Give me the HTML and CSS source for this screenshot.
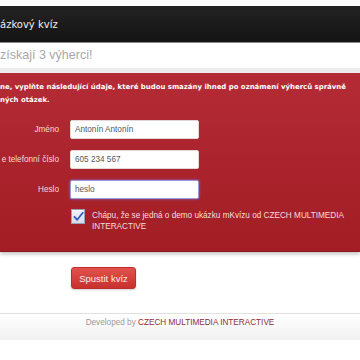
FILE: index.html
```html
<!DOCTYPE html>
<html lang="cs">
<head>
  <meta charset="UTF-8" />
  <meta name="viewport" content="width=device-width, initial-scale=1.0" />
  <title>Ukázkový kvíz</title>
  <link rel="stylesheet" href="styles.css">
</head>
<body>
  <div class="page">
    <!-- Header -->
    <div class="topbar">
      <div class="title">ázkový kvíz</div>
    </div>
    <div class="subtitle">získají 3 výherci!</div>

    <!-- Registration form -->
    <div class="panel">
      <p class="intro">ne, vyplňte následující údaje, které budou smazány ihned po oznámení výherců správně<br>ných otázek.</p>
      <div class="form">
        <div class="row">
          <label class="label">Jméno</label>
          <input class="field" type="text" value="Antonín Antonín">
        </div>
        <div class="row">
          <label class="label">e telefonní číslo</label>
          <input class="field" type="text" value="605 234 567">
        </div>
        <div class="row">
          <label class="label">Heslo</label>
          <input class="field focused" type="text" value="heslo">
        </div>
        <div class="agree">
          <span class="check">
            <svg width="11" height="11" viewBox="0 0 11 11"><path d="M1.5 5.8 L4.2 8.8 L9.8 1.8" fill="none" stroke="#2f5fbf" stroke-width="1.8" stroke-linecap="round" stroke-linejoin="round"/></svg>
          </span>
          <span class="agree-text">Chápu, že se jedná o demo ukázku mKvízu od CZECH MULTIMEDIA INTERACTIVE</span>
        </div>
      </div>
    </div>

    <div class="actions">
      <button class="start">Spustit kvíz</button>
    </div>

    <div class="footer">
      Developed by <a href="#" class="brand">CZECH MULTIMEDIA INTERACTIVE</a>
    </div>
  </div>
</body>
</html>
```

FILE: styles.css
```css
body {
  margin: 0;
  background: #fff;
  font-family: 'Liberation Sans', Arial, sans-serif;
  overflow: hidden;
}
.page {
  padding-top: 6px;
}
/* Dark title bar */
.topbar {
  height: 36px;
  background: linear-gradient(#232323, #131313);
  border-bottom: 1px solid #8a8a8a;
  display: flex;
  align-items: center;
}
.title {
  color: #eee;
  font-family: 'DejaVu Sans', Verdana, sans-serif;
  font-size: 10px;
  padding-top: 1px;
}
.subtitle {
  height: 25px;
  line-height: 24px;
  color: #a8a8a8;
  font-size: 12.5px;
  background: #fff;
  border-bottom: 5px solid #ececec;
  position: relative;
  z-index: 2;
}
/* Red form panel */
.panel {
  background: linear-gradient(#b42b36, #a21d24);
  border-bottom: 1px solid #8e171c;
  box-shadow: 0 2px 4px rgba(0, 0, 0, 0.25);
  height: 179px;
  box-sizing: border-box;
  padding-top: 8px;
}
.intro {
  margin: 0;
  color: #fff;
  font-family: 'DejaVu Sans', Verdana, sans-serif;
  font-weight: bold;
  font-size: 6.95px;
  line-height: 13px;
  white-space: nowrap;
}
.form {
  margin-top: 12px;
  display: flex;
  flex-direction: column;
  gap: 10px;
}
.row {
  display: flex;
  align-items: center;
  gap: 11px;
  height: 20px;
}
.label {
  width: 59px;
  flex-shrink: 0;
  text-align: right;
  white-space: nowrap;
  color: #f3d9db;
  font-size: 8.2px;
}
.field {
  width: 129px;
  height: 19px;
  box-sizing: border-box;
  border: 1px solid #e3d6d7;
  border-radius: 2px;
  background: #fff;
  padding: 0 4px;
  font-family: 'Liberation Sans', Arial, sans-serif;
  font-size: 8.2px;
  color: #555;
  margin: 0;
}
.field.focused {
  border-color: #9a9ad8;
  box-shadow: 0 0 3px rgba(120, 120, 255, 0.8);
}
.agree {
  display: flex;
  align-items: flex-start;
  gap: 7px;
  padding-left: 71px;
}
.check {
  width: 14px;
  height: 15px;
  box-sizing: border-box;
  border: 1px solid #9aa0b8;
  background: linear-gradient(#f4f4f8, #d7d9e6);
  display: flex;
  align-items: center;
  justify-content: center;
  flex-shrink: 0;
}
.agree-text {
  color: #f6dcdd;
  font-size: 8.2px;
  line-height: 11px;
  width: 262px;
  padding-top: 1px;
}
/* Start button */
.actions {
  padding: 15px 0 0 71px;
  height: 46px;
  box-sizing: border-box;
}
.start {
  width: 65px;
  height: 22px;
  border: 1px solid #bf2d2a;
  border-radius: 3px;
  background: linear-gradient(#e2524d, #c8302c);
  box-shadow: 0 1px 2px rgba(0, 0, 0, 0.2);
  color: #fde8e8;
  font-family: 'Liberation Sans', Arial, sans-serif;
  font-size: 9.5px;
  padding: 0;
}
/* Footer */
.footer {
  margin-top: 15px;
  height: 27px;
  box-sizing: border-box;
  border-top: 1px solid #e2e2e2;
  background: linear-gradient(#fff, #f1f1f1);
  box-shadow: 0 2px 3px rgba(0, 0, 0, 0.12);
  text-align: center;
  font-size: 8.2px;
  line-height: 18px;
  color: #9a9a9a;
}
.brand {
  color: #8e2d36;
  text-decoration: none;
}
```
